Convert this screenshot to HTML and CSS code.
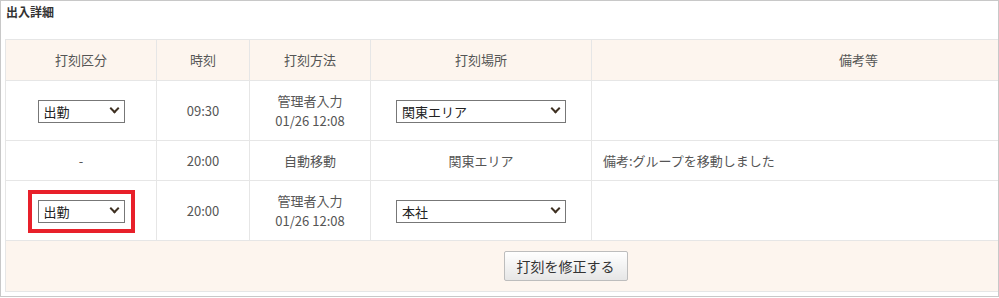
FILE: index.html
```html
<!DOCTYPE html>
<html lang="ja">
<head>
<meta charset="utf-8">
<title>出入詳細</title>
<link rel="stylesheet" href="styles.css">
</head>
<body>
<div class="panel">
  <div class="panel-title">出入詳細</div>
  <div class="table-wrap">
    <table class="detail">
      <colgroup>
        <col class="c1"><col class="c2"><col class="c3"><col class="c4"><col class="c5">
      </colgroup>
      <thead>
        <tr>
          <th>打刻区分</th>
          <th>時刻</th>
          <th>打刻方法</th>
          <th>打刻場所</th>
          <th>備考等</th>
        </tr>
      </thead>
      <tbody>
        <tr>
          <td class="center">
            <span class="sel-wrap"><select class="sel-kind"><option>出勤</option><option>退勤</option></select></span>
          </td>
          <td class="center">09:30</td>
          <td class="center">管理者入力<br>01/26 12:08</td>
          <td class="center">
            <span class="sel-wrap"><select class="sel-place"><option>関東エリア</option><option>本社</option></select></span>
          </td>
          <td></td>
        </tr>
        <tr>
          <td class="center">-</td>
          <td class="center">20:00</td>
          <td class="center">自動移動</td>
          <td class="center">関東エリア</td>
          <td>備考:グループを移動しました</td>
        </tr>
        <tr>
          <td class="center">
            <span class="sel-wrap"><select class="sel-kind highlight"><option>出勤</option><option>退勤</option></select></span>
          </td>
          <td class="center">20:00</td>
          <td class="center">管理者入力<br>01/26 12:08</td>
          <td class="center">
            <span class="sel-wrap"><select class="sel-place"><option>本社</option><option>関東エリア</option></select></span>
          </td>
          <td></td>
        </tr>
      </tbody>
      <tfoot>
        <tr>
          <td colspan="5" class="center foot"><button class="btn" type="button">打刻を修正する</button></td>
        </tr>
      </tfoot>
    </table>
  </div>
</div>
</body>
</html>
```

FILE: styles.css
```css
html, body {
  margin: 0;
  padding: 0;
  background: #fff;
}
body {
  font-family: "Noto Sans CJK JP", "Noto Sans", sans-serif;
  color: #555;
}
.panel {
  box-sizing: border-box;
  width: 999px;
  height: 297px;
  border: 1px solid #c8c8c8;
  overflow: hidden;
  padding: 3px 0 0 4px;
}
.panel-title {
  font-size: 12px;
  line-height: 16px;
  font-weight: bold;
  color: #333;
  padding-left: 1px;
}
.table-wrap {
  margin-top: 19px;
}
.detail {
  border-collapse: collapse;
  table-layout: fixed;
  width: 1120px;
  font-size: 13px;
  line-height: 20px;
  color: #555;
}
.c1 { width: 151px; }
.c2 { width: 93px; }
.c3 { width: 121px; }
.c4 { width: 221px; }
.c5 { width: 534px; }
.detail th,
.detail td {
  border: 1px solid #e6e6e6;
  padding: 10px 10px 9px 11px;
  vertical-align: middle;
  text-align: left;
}
.detail th {
  background: #fdf5ee;
  font-weight: normal;
  text-align: center;
  padding: 10px;
}
.detail td.center {
  text-align: center;
  padding-left: 10px;
}
.detail td.foot {
  background: #fdf5ee;
  padding: 10px;
}
.sel-wrap {
  position: relative;
  display: inline-block;
  vertical-align: middle;
  line-height: 0;
}
.sel-wrap::after {
  content: "";
  position: absolute;
  right: 7px;
  top: 5px;
  width: 5px;
  height: 5px;
  border-right: 2px solid #3f3122;
  border-bottom: 2px solid #3f3122;
  transform: rotate(45deg);
  pointer-events: none;
}
select {
  -webkit-appearance: none;
  appearance: none;
  font-family: "Noto Sans CJK JP", "Noto Sans", sans-serif;
  font-size: 13px;
  line-height: 21px;
  color: #222;
  height: 23px;
  border: 1px solid #777;
  border-radius: 0;
  background: #fff;
  padding: 0 20px 0 5px;
  margin: 0;
  box-sizing: border-box;
}
.sel-kind { width: 87px; }
.sel-place { width: 170px; }
.highlight {
  outline: 4px solid #e8202a;
  outline-offset: 6px;
}
.btn {
  font-family: "Noto Sans CJK JP", "Noto Sans", sans-serif;
  font-size: 14px;
  color: #333;
  width: 124px;
  height: 30px;
  border: 1px solid #bdbdbd;
  border-radius: 2px;
  background: linear-gradient(#ffffff, #e6e6e6);
  padding: 0;
  cursor: pointer;
}
```
